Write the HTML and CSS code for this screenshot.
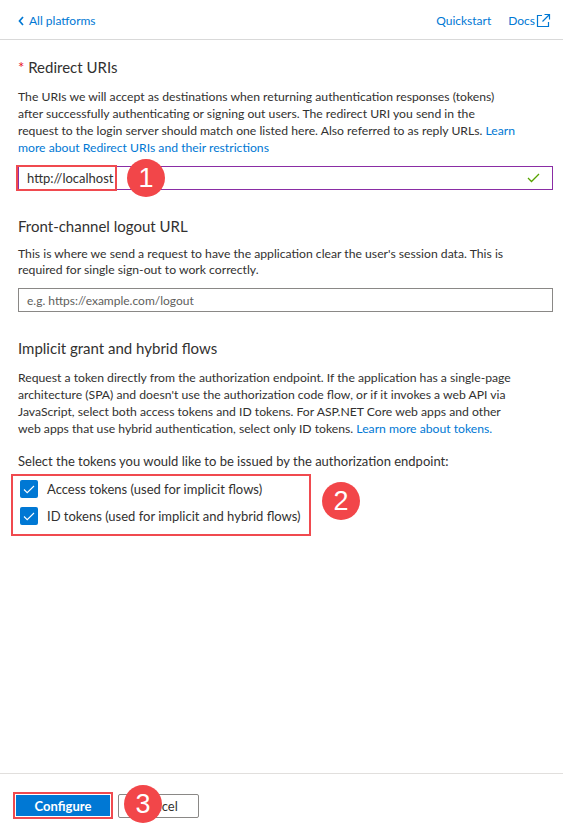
FILE: index.html
```html
<!DOCTYPE html>
<html lang="en">
<head>
<meta charset="utf-8">
<title>Configure Web</title>
<link rel="stylesheet" href="styles.css">
</head>
<body>
<div class="panel">
  <header class="topbar">
    <a class="back" href="#">
      <svg class="chev" width="6" height="10" viewBox="0 0 6 10"><path d="M5 1 1.5 5 5 9" fill="none" stroke="#0078d4" stroke-width="1.7"/></svg>
      All platforms
    </a>
    <nav class="toplinks">
      <a href="#">Quickstart</a>
      <a href="#" class="docs">Docs<svg width="15" height="15" viewBox="0 0 15 15"><path d="M6 2.5H1.5v11h11V9" fill="none" stroke="#0078d4" stroke-width="1.2"/><path d="M6.5 8.5 13.5 1.5M8.5 1.5h5v5" fill="none" stroke="#0078d4" stroke-width="1.2"/></svg></a>
    </nav>
  </header>

  <main class="content">
    <section class="sec sec-first">
      <h2 class="title"><span class="req">*</span> Redirect URIs</h2>
      <p class="desc">The URIs we will accept as destinations when returning authentication responses (tokens)<br>after successfully authenticating or signing out users. The redirect URI you send in the<br>request to the login server should match one listed here. Also referred to as reply URLs. <a href="#">Learn<br>more about Redirect URIs and their restrictions</a></p>
      <div class="field field-active">
        <span class="value">http://localhost</span>
        <svg class="ok" width="13" height="10" viewBox="0 0 13 10"><path d="M1 5l3.5 3.5L12 1" fill="none" stroke="#57a300" stroke-width="1.3"/></svg>
        <span class="hl hl-uri"></span>
        <span class="badge badge-1">1</span>
      </div>
    </section>

    <section class="sec">
      <h2 class="title">Front-channel logout URL</h2>
      <p class="desc desc-tight">This is where we send a request to have the application clear the user's session data. This is<br>required for single sign-out to work correctly.</p>
      <div class="field">
        <span class="placeholder">e.g. https://example.com/logout</span>
      </div>
    </section>

    <section class="sec">
      <h2 class="title">Implicit grant and hybrid flows</h2>
      <p class="desc">Request a token directly from the authorization endpoint. If the application has a single-page<br>architecture (SPA) and doesn't use the authorization code flow, or if it invokes a web API via<br>JavaScript, select both access tokens and ID tokens. For ASP.NET Core web apps and other<br>web apps that use hybrid authentication, select only ID tokens. <a href="#">Learn more about tokens.</a></p>
      <p class="select-label">Select the tokens you would like to be issued by the authorization endpoint:</p>
      <div class="tokens">
        <label class="check"><span class="box"><svg width="12" height="9" viewBox="0 0 12 9"><path d="M1 4.5l3.2 3.2L11 1" fill="none" stroke="#fff" stroke-width="1.1"/></svg></span>Access tokens (used for implicit flows)</label>
        <label class="check"><span class="box"><svg width="12" height="9" viewBox="0 0 12 9"><path d="M1 4.5l3.2 3.2L11 1" fill="none" stroke="#fff" stroke-width="1.1"/></svg></span>ID tokens (used for implicit and hybrid flows)</label>
        <span class="badge badge-2">2</span>
      </div>
    </section>
  </main>

  <footer class="footer">
    <button class="btn btn-primary">Configure</button>
    <button class="btn btn-default">Cancel</button>
    <span class="badge badge-3">3</span>
  </footer>
</div>
</body>
</html>
```
FILE: styles.css
```css
* { box-sizing: border-box; }
html, body { margin: 0; padding: 0; background: #fff; }
body {
  font-family: "Segoe UI", Lato, "Open Sans", sans-serif;
  font-size: 13px;
  color: #323130;
}
a { color: #0078d4; text-decoration: none; }

.panel {
  height: 831px;
  display: flex;
  flex-direction: column;
}

.topbar {
  height: 40px;
  border-bottom: 1px solid #d9d9d9;
  display: flex;
  align-items: center;
  justify-content: space-between;
  padding: 2px 12px 0 18px;
  flex: none;
  font-size: 12px;
}
.back { display: flex; align-items: center; gap: 5px; }
.toplinks { display: flex; gap: 17px; }
.docs { display: flex; align-items: center; gap: 1px; }

.content {
  flex: 1;
  padding: 0 10px 0 18px;
}

.sec { margin-top: 26px; }
.sec-first { margin-top: 17px; }

.title {
  margin: 0;
  font-size: 15px;
  font-weight: 400;
  line-height: 20px;
  color: #323130;
}
.req { color: #e81123; }

.desc {
  margin: 11px 0 0;
  font-size: 12.2px;
  line-height: 17px;
  white-space: nowrap;
}
.desc-tight { margin-top: 10px; line-height: 16px; }

.field {
  position: relative;
  margin-top: 10px;
  height: 24px;
  border: 1px solid #8a8886;
  display: flex;
  align-items: center;
  padding: 0 8px;
  background: #fff;
}
.field-active { border-color: #8a2da5; }
.value { color: #323130; }
.ok { margin-left: auto; margin-right: 4px; }
.placeholder { color: #605e5c; font-size: 12px; }

.hl {
  position: absolute;
  border: 2px solid #f04a4f;
  pointer-events: none;
}
.hl-uri { left: -3px; top: -2px; width: 101px; height: 26px; }

.badge {
  position: absolute;
  width: 38px;
  height: 38px;
  border-radius: 50%;
  background: #f24649;
  color: #fff;
  font-family: "Liberation Sans", Arial, sans-serif;
  font-size: 27px;
  line-height: 38px;
  text-align: center;
}
.badge-1 { left: 108px; top: -8px; }

.select-label { margin: 16px 0 0; line-height: 17px; }

.tokens {
  position: relative;
  margin: 4px 0 0 -7px;
  width: 300px;
  height: 62px;
  border: 2px solid #f04a4f;
  padding: 4px 0 0 7px;
  display: flex;
  flex-direction: column;
  gap: 9px;
}
.check { display: flex; align-items: center; gap: 9px; line-height: 18px; white-space: nowrap; }
.box {
  width: 18px;
  height: 18px;
  border-radius: 2px;
  background: #0078d4;
  display: flex;
  align-items: center;
  justify-content: center;
  flex: none;
}
.badge-2 { left: 309px; top: 6px; }

.footer {
  position: relative;
  flex: none;
  height: 58px;
  border-top: 1px solid #e1dfdd;
  display: flex;
  align-items: flex-start;
  padding: 18px 0 0 13px;
  gap: 5px;
}
.btn {
  font-family: inherit;
  font-size: 13px;
  height: 24px;
  padding: 0;
  cursor: pointer;
}
.btn-primary {
  width: 100px;
  height: 27px;
  background: #0078d4;
  color: #fff;
  font-weight: 700;
  border: 2px solid #f04a4f;
  box-shadow: inset 0 0 0 1px #fff;
}
.btn-default {
  margin-top: 2px;
  width: 81px;
  height: 24px;
  background: #fff;
  color: #323130;
  border: 1px solid #8a8886;
  border-radius: 2px;
}
.badge-3 { left: 124px; top: 11px; }
```
